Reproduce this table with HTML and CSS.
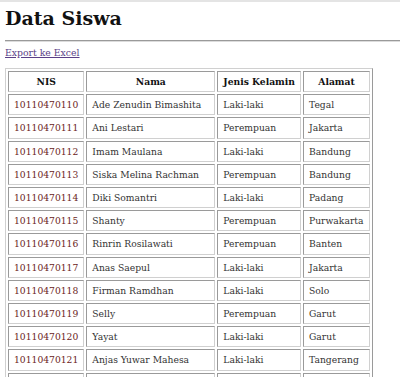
FILE: index.html
```html
<!DOCTYPE html>
<html>
<head>
<meta charset="utf-8">
<link rel="stylesheet" href="styles.css">
</head>
<body>
<div class="topbar"></div>
<div class="page">
  <h1 class="title">Data Siswa</h1>
  <div class="rule"></div>
  <a class="export" href="#">Export ke Excel</a>
  <table class="data">
    <thead>
      <tr><th class="c1">NIS</th><th class="c2">Nama</th><th class="c3">Jenis Kelamin</th><th class="c4">Alamat</th></tr>
    </thead>
    <tbody>
      <tr><td class="nis">10110470110</td><td>Ade Zenudin Bimashita</td><td>Laki-laki</td><td>Tegal</td></tr>
      <tr><td class="nis">10110470111</td><td>Ani Lestari</td><td>Perempuan</td><td>Jakarta</td></tr>
      <tr><td class="nis">10110470112</td><td>Imam Maulana</td><td>Laki-laki</td><td>Bandung</td></tr>
      <tr><td class="nis">10110470113</td><td>Siska Melina Rachman</td><td>Perempuan</td><td>Bandung</td></tr>
      <tr><td class="nis">10110470114</td><td>Diki Somantri</td><td>Laki-laki</td><td>Padang</td></tr>
      <tr><td class="nis">10110470115</td><td>Shanty</td><td>Perempuan</td><td>Purwakarta</td></tr>
      <tr><td class="nis">10110470116</td><td>Rinrin Rosilawati</td><td>Perempuan</td><td>Banten</td></tr>
      <tr><td class="nis">10110470117</td><td>Anas Saepul</td><td>Laki-laki</td><td>Jakarta</td></tr>
      <tr><td class="nis">10110470118</td><td>Firman Ramdhan</td><td>Laki-laki</td><td>Solo</td></tr>
      <tr><td class="nis">10110470119</td><td>Selly</td><td>Perempuan</td><td>Garut</td></tr>
      <tr><td class="nis">10110470120</td><td>Yayat</td><td>Laki-laki</td><td>Garut</td></tr>
      <tr><td class="nis">10110470121</td><td>Anjas Yuwar Mahesa</td><td>Laki-laki</td><td>Tangerang</td></tr>
      <tr><td class="nis">10110470122</td><td>Rina Marlina</td><td>Perempuan</td><td>Bogor</td></tr>
    </tbody>
  </table>
</div>
</body>
</html>
```
FILE: styles.css
```css
html, body {
  margin: 0;
  padding: 0;
  background: #ffffff;
  overflow: hidden;
}
body {
  font-family: "DejaVu Serif", "Liberation Serif", serif;
  color: #333333;
}
.topbar {
  height: 2px;
  background: #e4e4e4;
}
.page {
  padding: 0 0 0 5px;
}
.title {
  font-family: "DejaVu Serif", serif;
  font-size: 19px;
  font-weight: 700;
  color: #111111;
  margin: 5px 0 0 0;
  line-height: 22px;
}
.rule {
  margin-top: 11px;
  height: 0;
  border-top: 1px solid #9a9a9a;
  border-bottom: 1px solid #dcdcdc;
  margin-right: -5px;
}
.export {
  display: block;
  margin-top: 5px;
  font-size: 9.3px;
  line-height: 12px;
  color: #5a3f87;
  text-decoration: underline;
  width: max-content;
}
.data {
  margin-top: 9px;
  border: 1px solid;
  border-color: #d0d0d0 #9a9a9a #9a9a9a #d0d0d0;
  border-spacing: 2px;
  font-size: 9.2px;
}
.data th, .data td {
  border: 1px solid;
  border-color: #9a9a9a #d0d0d0 #d0d0d0 #9a9a9a;
  padding: 4px 5px;
  height: 11.2px;
  line-height: 11.2px;
  white-space: nowrap;
}
.data th {
  font-weight: 700;
  color: #111111;
  text-align: center;
}
.data td {
  text-align: left;
}
.data .nis {
  color: #6a1c22;
}
.c1 { width: 60px; }
.c2 { width: 117px; }
.c3 { width: 70px; }
.c4 { width: 55px; }
```
